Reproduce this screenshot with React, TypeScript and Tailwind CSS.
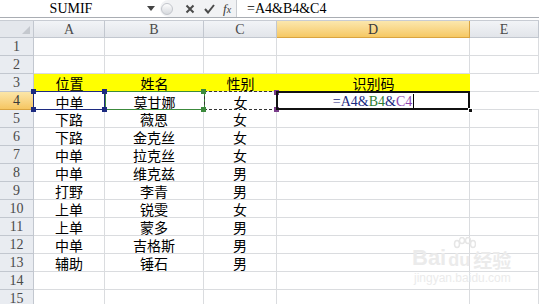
import React from "react";

const colW = ["w-[71px]", "w-[99px]", "w-[73px]", "w-[193px]", "flex-1"];
const colNames = ["A", "B", "C", "D", "E"];

const data: string[][] = [
  ["下路", "薇恩", "女"],
  ["下路", "金克丝", "女"],
  ["中单", "拉克丝", "女"],
  ["中单", "维克兹", "男"],
  ["打野", "李青", "男"],
  ["上单", "锐雯", "女"],
  ["上单", "蒙多", "男"],
  ["中单", "吉格斯", "男"],
  ["辅助", "锤石", "男"],
];

const serif = "font-['Liberation_Serif','Noto_Sans_CJK_SC',serif]";
const cjk = "font-['Noto_Sans_CJK_SC',sans-serif]";

function RowHead({ n, active }: { n: number; active?: boolean }) {
  return (
    <div
      className={`w-[34px] shrink-0 h-full flex items-center justify-center border-r border-b text-[14px] ${serif} ${
        active
          ? "bg-gradient-to-b from-[#fbe6a8] to-[#f6c661] border-[#d9a441] text-[#3a3a3a]"
          : "bg-[#e9ecf1] border-[#c2c7cf] text-[#4a4a4a]"
      }`}
    >
      {n}
    </div>
  );
}

function Handle({ pos, color }: { pos: string; color: string }) {
  return <span className={`absolute w-[5px] h-[5px] ${pos} ${color}`} />;
}

export default function App() {
  return (
    <div className="w-[539px] h-[304px] overflow-hidden bg-white relative select-none">
      {/* formula bar */}
      <div className="h-[18px] flex items-center border-b border-[#a9adb3] bg-white">
        <div className={`w-[142px] text-center text-[14px] text-black ${serif}`}>SUMIF</div>
        <div className="w-[18px] flex justify-center">
          <svg width="8" height="5" viewBox="0 0 8 5">
            <path d="M0 0 L8 0 L4 5 Z" fill="#444" />
          </svg>
        </div>
        <div className="h-[17px] w-[77px] flex items-center bg-[#f1f2f4] rounded-l-full border-r border-[#c9ccd1]">
          <span className="w-[12px] h-[12px] ml-[1px] rounded-full bg-gradient-to-b from-[#fdfdfd] to-[#d6d9de] border border-[#c3c6cc]" />
          <svg className="ml-[12px]" width="10" height="10" viewBox="0 0 10 10">
            <path d="M1.5 1.5 L8.5 8.5 M8.5 1.5 L1.5 8.5" stroke="#4a4a4a" strokeWidth="2" />
          </svg>
          <svg className="ml-[9px]" width="11" height="10" viewBox="0 0 11 10">
            <path d="M1 5 L4 8.5 L10 1" stroke="#4a4a4a" strokeWidth="2" fill="none" />
          </svg>
          <span className="ml-[8px] text-[13px] italic text-[#3a3a3a] font-['Liberation_Serif',serif]">
            f<span className="text-[10px]">x</span>
          </span>
        </div>
        <div className={`ml-[10px] text-[14px] text-black ${serif}`}>=A4&amp;B4&amp;C4</div>
      </div>
      <div className="h-[3px] bg-white border-b border-[#c8ccd3]" />

      {/* column headers */}
      <div className="h-[17px] flex">
        <div className="w-[34px] shrink-0 h-full bg-[#e4e7ec] border-r border-b border-[#c2c7cf] relative">
          <svg className="absolute right-[3px] bottom-[3px]" width="8" height="8" viewBox="0 0 8 8">
            <path d="M8 0 L8 8 L0 8 Z" fill="#c4c8ce" />
          </svg>
        </div>
        {colNames.map((c, i) => (
          <div
            key={c}
            className={`${colW[i]} shrink-0 h-full flex items-center justify-center border-r border-b text-[14px] ${serif} ${
              c === "D"
                ? "bg-gradient-to-b from-[#fbe7ad] to-[#f6c862] border-[#d9a441] text-[#3a3a3a]"
                : "bg-gradient-to-b from-[#f2f4f7] to-[#e2e5ea] border-[#c2c7cf] text-[#4a4a4a]"
            }`}
          >
            {c}
          </div>
        ))}
      </div>

      {/* rows 1-2 */}
      {[1, 2].map((n) => (
        <div key={n} className="h-[18px] flex">
          <RowHead n={n} />
          {colW.map((w, i) => (
            <div key={i} className={`${w} shrink-0 h-full border-r border-b border-[#dadcdf]`} />
          ))}
        </div>
      ))}

      {/* row 3 headings */}
      <div className={`h-[18px] flex text-[14px] text-black ${cjk}`}>
        <RowHead n={3} />
        {["位置", "姓名", "性别", "识别码"].map((t, i) => (
          <div
            key={t}
            className={`${colW[i]} shrink-0 h-full flex items-center justify-center bg-[#ffff00] border-b border-[#dadcdf] leading-none pt-[1px]`}
          >
            {t}
          </div>
        ))}
        <div className="flex-1 h-full border-b border-[#dadcdf]" />
      </div>

      {/* row 4 with selections */}
      <div className={`h-[18px] flex text-[14px] text-black ${cjk}`}>
        <RowHead n={4} active />
        <div className="w-[71px] shrink-0 h-full relative flex items-center justify-center leading-none pt-[1px]">
          中单
          <span className="absolute -left-[1px] -top-[1px] w-[72px] h-[19px] border border-[#1c2a80]" />
          <Handle pos="-left-[3px] -top-[3px]" color="bg-[#1c2a80]" />
          <Handle pos="-left-[3px] -bottom-[2px]" color="bg-[#1c2a80]" />
        </div>
        <div className="w-[99px] shrink-0 h-full relative flex items-center justify-center leading-none pt-[1px]">
          莫甘娜
          <span className="absolute left-0 -top-[1px] w-[100px] h-[19px] border border-[#3c8a3c]" />
          <Handle pos="-left-[3px] -top-[3px]" color="bg-[#1c2a80]" />
          <Handle pos="-left-[3px] -bottom-[2px]" color="bg-[#1c2a80]" />
        </div>
        <div className="w-[73px] shrink-0 h-full relative flex items-center justify-center leading-none pt-[1px]">
          女
          <span className="absolute left-0 -top-[1px] w-[73px] h-[19px] border border-dashed border-[#333]" />
          <Handle pos="-left-[3px] -top-[3px]" color="bg-[#3c8a3c]" />
          <Handle pos="-left-[3px] -bottom-[2px]" color="bg-[#3c8a3c]" />
          <Handle pos="-right-[2px] -top-[2px]" color="bg-[#7a3d8a]" />
          <Handle pos="-right-[2px] -bottom-[2px]" color="bg-[#7a3d8a]" />
        </div>
        <div className={`w-[193px] shrink-0 h-full relative flex items-center justify-center text-[14px] ${serif}`}>
          <span className="text-[#1c2a80]">=A4&amp;</span>
          <span className="text-[#2e7d32]">B4</span>
          <span className="text-[#1c2a80]">&amp;</span>
          <span className="text-[#8e44ad]">C4</span>
          <span className="w-px h-[14px] bg-black ml-[1px]" />
          <span className="absolute -left-[1px] -top-[1px] w-[194px] h-[19px] border-2 border-[#111]" />
          <span className="absolute -right-[3px] -bottom-[3px] w-[5px] h-[5px] bg-[#111] border border-white" />
        </div>
        <div className="flex-1 h-full border-b border-[#dadcdf]" />
      </div>

      {/* data rows 5-13 */}
      {data.map((r, k) => (
        <div key={k} className={`h-[18px] flex text-[14px] text-black ${cjk}`}>
          <RowHead n={k + 5} />
          {colW.map((w, i) => (
            <div
              key={i}
              className={`${w} shrink-0 h-full flex items-center justify-center leading-none pt-[1px] border-r border-b border-[#dadcdf]`}
            >
              {r[i] ?? ""}
            </div>
          ))}
        </div>
      ))}

      {/* rows 14-15 */}
      {[14, 15].map((n) => (
        <div key={n} className="h-[18px] flex">
          <RowHead n={n} />
          {colW.map((w, i) => (
            <div key={i} className={`${w} shrink-0 h-full border-r border-b border-[#dadcdf]`} />
          ))}
        </div>
      ))}

      {/* watermark */}
      <div className="absolute left-[412px] top-[247px] text-[#ebebeb] pointer-events-none">
        <div className="flex items-end font-['Liberation_Sans',sans-serif] font-bold leading-none">
          <span className="text-[22px]">Bai</span>
          <span className="relative text-[18px] ml-[2px]">
            <svg className="absolute left-[4px] -top-[14px]" width="24" height="16" viewBox="0 0 24 16">
              <g fill="none" stroke="#e6e6e6" strokeWidth="1.5">
                <ellipse cx="5" cy="7" rx="2.5" ry="3.5" />
                <ellipse cx="10" cy="3.5" rx="2.5" ry="3" />
                <ellipse cx="16" cy="3.5" rx="2.5" ry="3" />
                <ellipse cx="21" cy="7" rx="2.5" ry="3.5" />
              </g>
            </svg>
            du
          </span>
          <span className={`text-[19px] ml-[3px] ${cjk}`}>经验</span>
        </div>
        <div className="text-[12px] mt-[3px] ml-[2px] font-['Liberation_Sans',sans-serif] leading-none">
          jingyan.baidu.com
        </div>
      </div>
    </div>
  );
}
